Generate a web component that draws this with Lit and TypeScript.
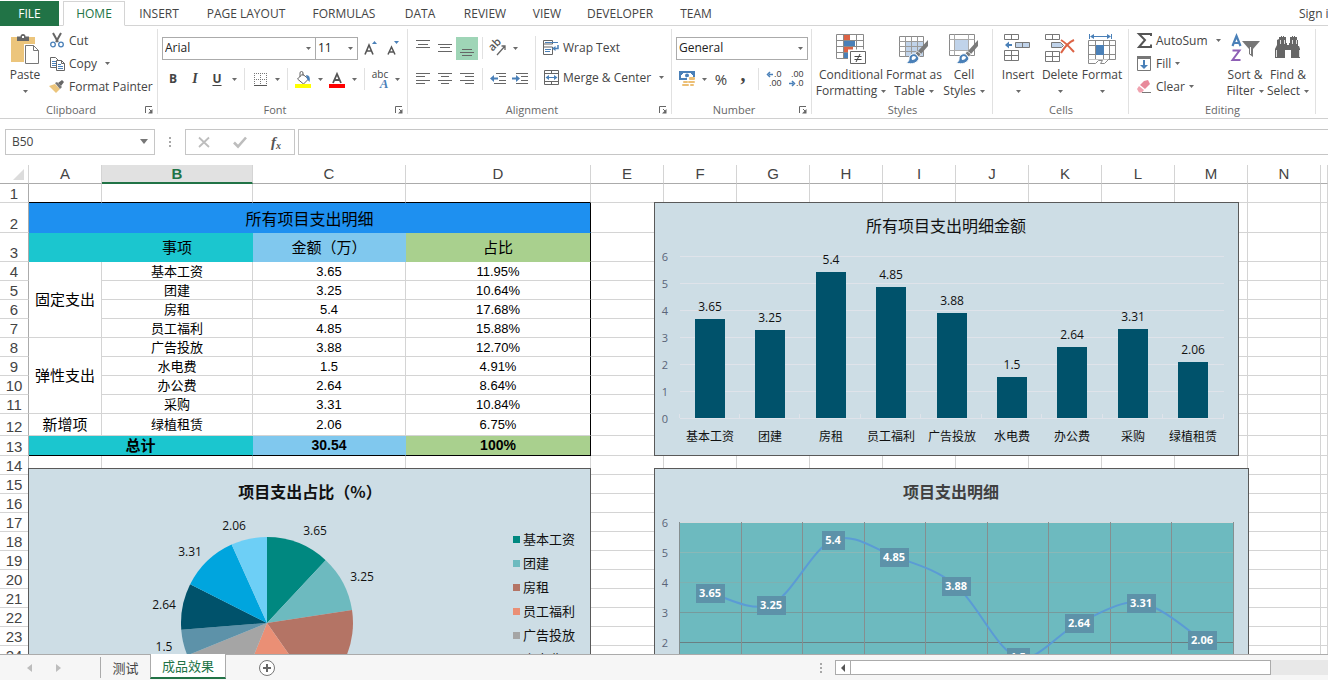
import { LitElement, html, svg, css, nothing } from "lit";
import type { TemplateResult } from "lit";
import { customElement, property } from "lit/decorators.js";
import { classMap } from "lit/directives/class-map.js";

interface Expense {
  name: string;
  value: number;
  share: string;
  color: string;
}

const expenses: Expense[] = [
  { name: "基本工资", value: 3.65, share: "11.95%", color: "#008880" },
  { name: "团建", value: 3.25, share: "10.64%", color: "#6dbabf" },
  { name: "房租", value: 5.4, share: "17.68%", color: "#b47465" },
  { name: "员工福利", value: 4.85, share: "15.88%", color: "#ea8f75" },
  { name: "广告投放", value: 3.88, share: "12.70%", color: "#a5a5a5" },
  { name: "水电费", value: 1.5, share: "4.91%", color: "#5d92a9" },
  { name: "办公费", value: 2.64, share: "8.64%", color: "#00526b" },
  { name: "采购", value: 3.31, share: "10.84%", color: "#00a5de" },
  { name: "绿植租赁", value: 2.06, share: "6.75%", color: "#6dcff6" },
];

const icon = (w: number, h: number, body: unknown) =>
  html`<svg width=${w} height=${h} viewBox="0 0 ${w} ${h}" aria-hidden="true">${body}</svg>`;

const arrow = icon(5, 3, svg`<path d="M0 0h5L2.5 3z" fill="#6a6a6a"/>`);

const rules = (w: number, h: number, lines: number[][]) =>
  icon(w, h, svg`<path stroke="#666" fill="none" d=${lines.map(([x, y, l]) => `M${x} ${y}.5h${l}`).join("")} />`);

const brush = svg`<path d="M29 6v6l-7 8-3-3z" fill="#7a7a7a"/><path d="M18 17l4 3-2 3-4-3z" fill="#7a7a7a" stroke="#fff" stroke-width=".6"/>
  <path d="M17 20c-4-1-7 1-7 5 0 2-1 3-3 4 6 2 12 0 13-5z" fill="#4a80b8" stroke="#fff"/>
  <path d="M15 22c-2 0-3 2-2 4 2 0 4-1 4-3z" fill="#fff"/>`;

const icons = {
  paste: icon(28, 30, svg`<path d="M0 3h24v25H0z" fill="#ecc57c"/><path d="M6 7V2.500h3.500a2.500 2.500 0 0 1 5 0H18V7z" fill="#666"/><path d="M11 2h2v2h-2z" fill="#fff"/>
    <path d="M14.500 11.500H23l5 5V29.500H14.500z" fill="#fff" stroke="#fff" stroke-width="3"/><path d="M14.500 11.500H22.500l5 5V29.500H14.500z" fill="#fff" stroke="#777"/><path d="M22.500 11.500v5h5" fill="none" stroke="#777"/>`),
  cut: icon(14, 15, svg`<path d="M3 0l5 9M11 0L6 9" stroke="#666" stroke-width="2" fill="none"/><circle cx="3" cy="11.500" r="2.300" fill="none" stroke="#4a80b8" stroke-width="1.300"/><circle cx="11" cy="11.500" r="2.300" fill="none" stroke="#4a80b8" stroke-width="1.300"/>`),
  copy: icon(15, 14, svg`<path d="M.5.5h5l3 3v7h-8z" fill="#fff" stroke="#666"/><path d="M2 4.500h4M2 6.500h4M2 8.500h4" stroke="#4a80b8"/><path d="M6.500 3.500h5l3 3v7h-8z" fill="#fff" stroke="#666"/><path d="M11.500 3.500v3h3" fill="none" stroke="#666"/><path d="M8 7.500h3M8 9.500h5M8 11.500h5" stroke="#4a80b8"/>`),
  painter: icon(16, 14, svg`<path d="M0 6l6-2 5 5-4 4z" fill="#ecc57c"/><path d="M6 3l2-1 5 5-2 2z" fill="#777"/><path d="M9 3l4-3 2 2-3 4z" fill="#666"/>`),
  growFont: icon(14, 14, svg`<path d="M1 13.500L5 4l4 9.500M2.500 10h5" stroke="#555" stroke-width="1.600" fill="none"/><path d="M8 3h5L10.500 0z" fill="#4a80b8"/>`),
  shrinkFont: icon(14, 14, svg`<path d="M2 13.500L5.500 6 9 13.500M3.500 11h4" stroke="#555" stroke-width="1.500" fill="none"/><path d="M8 0h5l-2.500 3z" fill="#4a80b8"/>`),
  borders: icon(13, 13, svg`<path d="M0 .5h13M0 6.500h13M.5 0v12M6.500 0v12M12.500 0v12" stroke="#777" stroke-dasharray="1 1" fill="none"/><path d="M0 12.500h13" stroke="#555"/>`),
  fill: icon(16, 17, svg`<path d="M2.500 8L7.500 3l6 5-5 5z" fill="#fff" stroke="#666"/><path d="M5 6V2q0-1.500 1.500-1.500T8 2v3" fill="none" stroke="#666"/><path d="M11 4q5 0 3.500 7L12 8z" fill="#4a80b8"/><path d="M0 13h16v4H0z" fill="#ff0"/>`),
  fontColor: icon(16, 17, svg`<path d="M4 12L8 3l4 9M5.500 9h5" stroke="#555" stroke-width="1.800" fill="none"/><path d="M0 13h16v4H0z" fill="#f00"/>`),
  alignTop: rules(14, 18, [[0, 1, 14], [2, 5, 10], [0, 8, 14]]),
  alignMiddle: rules(14, 18, [[0, 5, 14], [2, 8, 10], [0, 12, 14]]),
  alignBottom: rules(14, 18, [[2, 10, 10], [0, 13, 14], [2, 16, 10]]),
  alignLeft: rules(14, 12, [[0, 0, 14], [0, 3, 9], [0, 7, 14], [0, 10, 9]]),
  alignCenter: rules(14, 12, [[0, 0, 14], [3, 3, 8], [0, 7, 14], [3, 10, 8]]),
  alignRight: rules(14, 12, [[0, 0, 14], [5, 3, 9], [0, 7, 14], [5, 10, 9]]),
  outdent: icon(16, 12, svg`<path d="M6 .5h10M9 3.500h7M9 7.500h7M4 10.500h12" stroke="#666"/><path d="M0 5.500L4 2v2.500h4v2H4V9z" fill="#4a80b8"/>`),
  indent: icon(16, 12, svg`<path d="M4 .5h12M9 3.500h7M9 7.500h7M4 10.500h12" stroke="#666"/><path d="M8 5.500L4 2v2.500H0v2h4V9z" fill="#4a80b8"/>`),
  orientation: icon(17, 16, svg`<text y="3" transform="translate(5 5) rotate(-45)" text-anchor="middle" font-size="11" font-weight="600" fill="#555">ab</text><path d="M7 15l8-9M11.500 6H15v4" stroke="#666" fill="none" stroke-width="1.300"/>`),
  wrap: icon(16, 15, svg`<path d="M.5.500h9v3.500h-9zM.5 7h9v7.500h-9zM.5 4v3" fill="#fff" stroke="#666"/><path d="M2 2.500h13" stroke="#4a80b8"/><path d="M2 9.500h6M2 11.500h5" stroke="#4a80b8"/><path d="M15 5v3.500h-3" stroke="#4a80b8" stroke-width="1.500" fill="none"/><path d="M9 8.500L12.500 6v5z" fill="#4a80b8"/>`),
  merge: icon(15, 15, svg`<path d="M.5.500h14v14H.5zM.5 3.500h14M.5 11.500h14M7.500.500v3M7.500 11.500v3" fill="none" stroke="#666"/><path d="M3 7.500h9" stroke="#4a80b8"/><path d="M1.500 7.500L5 5v5zM13.500 7.500L10 5v5z" fill="#4a80b8"/>`),
  money: icon(16, 16, svg`<path d="M0 0h16v9H0z" fill="#4a80b8"/><path d="M2 2h12v5H2z" fill="#fff"/><path d="M2 2h2v1H3v1H2zM12 2h2v2h-1V3h-1z" fill="#4a80b8"/><circle cx="8" cy="4.500" r="2" fill="#4a80b8"/>
    <path d="M8 6h8v9H10v1H3v-6h5z" fill="#fff"/><g fill="#ecbf75"><rect x="10" y="6" width="6" height="3" rx="1"/><rect x="9" y="10" width="7" height="2" rx="1"/><rect x="11" y="13" width="4" height="2" rx="1"/><rect x="4" y="10" width="5" height="2" rx="1"/><rect x="3" y="13" width="7" height="2" rx="1"/></g>`),
  sigma: icon(15, 15, svg`<path d="M14 3V1H2l6 6-6 7h12v-2.500" fill="none" stroke="#555" stroke-width="2"/>`),
  fillDown: icon(14, 15, svg`<path d="M.5.500h13v14H.5z" fill="#fff" stroke="#777"/><path d="M0 0h14v3H0z" fill="#777"/><path d="M6 4h2v5h3l-4 4-4-4h3z" fill="#4a80b8"/>`),
  eraser: icon(14, 13, svg`<path d="M7 1l4-1 2 4-5 5-5-4z" fill="#e8899a"/><path d="M2 6l5 4-2 2.500H2L0 9z" fill="#f0a3b0"/><path d="M5 12.500h9" stroke="#777"/>`),
  conditional: icon(31, 31, svg`<path d="M.5.500h27v24H.5zM.5 6.500h27M.5 12.500h27M.5 18.500h27M7.500.500v24M20.500.500v24" fill="#fff" stroke="#8a8a8a"/><path d="M8 1h6v5H8z" fill="#dc6345"/><path d="M8 7h11v5H8z" fill="#4a80b8"/><path d="M8 13h9v5H8z" fill="#dc6345"/><path d="M8 19h5v5H8z" fill="#4a80b8"/><path d="M13 16.500h17v13H13z" fill="#fff" stroke="#fff" stroke-width="2"/><path d="M14.500 17.500h15v12h-15z" fill="#fff" stroke="#666"/><path d="M18.500 22.500h7M18.500 25.500h7M24 20l-4 8" stroke="#444"/>`),
  formatTable: icon(30, 31, svg`<path d="M.5 2.500h24v20H.5z" fill="#fff" stroke="#8a8a8a"/><path d="M6 8h18v14H6z" fill="#c0d3ea"/><path d="M.5 7.500h24M.5 12.500h24M.5 17.500h24M6.500 2.500v20M12.500 2.500v20M18.500 2.500v20" stroke="#9a9a9a"/>${brush}`),
  cellStyles: icon(30, 31, svg`<path d="M.5.500h25v21H.5z" fill="#fff" stroke="#8a8a8a"/><path d="M.5 5.500h25M.5 16.500h25M5.500.500v21M19.500.500v21" stroke="#aaa"/><path d="M6 6h13v10H6z" fill="#c0d3ea"/>${brush}`),
  insert: icon(28, 30, svg`<path d="M.5.500h14v5H.5zM7.500.500v5M.5 16.500h14v10H.5zM.5 21.500h14M7.500 16.500v10" fill="#fff" stroke="#777"/><path d="M11.500 8.500h14v5h-14z" fill="#c0d3ea" stroke="#777"/><path d="M18.500 8.500v5" stroke="#777"/><path d="M3 11h5" stroke="#4a80b8" stroke-width="2"/><path d="M1 11L5 7.500v7z" fill="#4a80b8"/>`),
  remove: icon(30, 30, svg`<path d="M.5.500h14v5H.5zM7.500.500v5M.5 17.500h14v10H.5zM.5 22.500h14M7.500 17.500v10" fill="#fff" stroke="#777"/><path d="M6.500 8.500h9l3 3-2 2h-10z" fill="#c0d3ea" stroke="#777"/><path d="M16 6q5 3 13 12M29 6q-7 3-13 13" stroke="#dc6345" stroke-width="2" fill="none"/>`),
  format: icon(29, 31, svg`<path d="M1.500 0v5M23.500 0v5M3 2.500h19" stroke="#4a80b8"/><path d="M2 2.500L6 0v5zM23 2.500L19 0v5z" fill="#4a80b8"/><path d="M.5 6.500h27v19H.5zM.5 11.500h27M.5 20.500h27M7.500 6.500v19M15.500 6.500v19M21.500 6.500v19" fill="#fff" stroke="#8a8a8a"/><path d="M8 11h8v10H8z" fill="#4a80b8"/><path d="M.5 25.500v4h7l3-3h4l-2 3h4l4-4" fill="#fff" stroke="#8a8a8a"/>`),
  sort: icon(29, 29, svg`<path d="M1.500 12L5.500 2l4 10M3 9h5" stroke="#4a80b8" stroke-width="2.200" fill="none"/><path d="M1.500 16.500h7L1.500 26h8" stroke="#8e5fb5" stroke-width="2" fill="none"/><path d="M11 7h18l-7 8v8l-4-3v-5z" fill="#777"/><path d="M19.500 13v7" stroke="#fff"/>`),
  find: icon(28, 26, svg`<path d="M5 5V3h2V2h1v1h1V2h1v1h2v2h0v4h1v2h2V9h1V3h2V2h1v1h1V2h1v1h2v2 1h1v6h1l1 3v9H17v-8h-6v8H1v-9l2-4V6z" fill="#666"/><path d="M6.500 6v4M2.500 16v7M10.500 6v4M18.500 6v4M25.500 16v7M22.500 6v4" stroke="#fff" stroke-width=".8"/>`),
  launcher: icon(8, 8, svg`<path d="M.5 7V.5H7M4 3l2.500 2.500" fill="none" stroke="#666"/><path d="M7.500 3v4.500H3z" fill="#666"/>`),
  cancel: icon(12, 12, svg`<path d="M1 1.500l10 9.500M11 1.500L1 11" stroke="#bdbdbd" stroke-width="1.800"/>`),
  check: icon(14, 12, svg`<path d="M1 6.500l4 4L13 1.500" stroke="#bdbdbd" stroke-width="2.600" fill="none"/>`),
  dots: icon(2, 12, svg`<path d="M0 1h2v2H0zM0 5h2v2H0zM0 9h2v2H0z" fill="#a8a8a8"/>`),
  prev: icon(5, 8, svg`<path d="M5 0v8L0 4z" fill="#bdbdbd"/>`),
  next: icon(5, 8, svg`<path d="M0 0v8l5-4z" fill="#bdbdbd"/>`),
  add: icon(18, 18, svg`<circle cx="9" cy="9" r="7.500" fill="#fff" stroke="#777"/><path d="M5 9h8M9 5v8" stroke="#666" stroke-width="2"/>`),
  scrollLeft: icon(4, 8, svg`<path d="M4 0v8L0 4z" fill="#555"/>`),
  corner: icon(11, 11, svg`<path d="M11 0v11H0z" fill="#dcdcdc"/>`),
};

const reset = css`
  *, *::before, *::after { box-sizing: border-box; }
  button, select, input { margin: 0; padding: 0; border: 0; border-radius: 0; background: none; color: inherit; font: inherit; appearance: none; }
  svg { display: block; flex: none; overflow: visible; }
`;

@customElement("ribbon-bar")
export class RibbonBar extends LitElement {
  static styles = [reset, css`
    :host { display: flex; flex: none; border-bottom: 1px solid #d0d0d0; padding-top: 3px; background: #fff; color: #444; font: 12px/16px "Open Sans", "Noto Sans", sans-serif; white-space: nowrap; }
    .group { display: flex; flex-direction: column; flex: none; padding-left: 4px; background: linear-gradient(#e1e1e1, #e1e1e1) right top / 1px calc(100% - 4px) no-repeat; }
    .clipboard { width: 158px; } .font { width: 250px; } .align { width: 264px; } .number { width: 140px; }
    .styles { width: 181px; } .cells { width: 136px; } .editing { width: 187px; }
    .body { display: flex; height: 73px; }
    .foot { display: flex; align-items: center; height: 16px; margin-left: -4px; font-size: 11px; color: #666; }
    .foot button { width: 8px; margin: 0 5px 0 3px; }
    .foot span { flex: 1; text-align: center; }
    .lines { display: flex; flex-direction: column; gap: 7px; padding-top: 7px; }
    .line { display: flex; align-items: center; height: 24px; }
    .tool { display: flex; align-items: center; justify-content: center; width: 22px; height: 23px; }
    .on { background: #9fd5b7; }
    .drop { display: flex; justify-content: center; width: 12px; padding: 9px 0; }
    .bar { width: 1px; height: 22px; margin: 0 4px; background: #e1e1e1; }
    .bold { font-weight: 700; }
    .italic { font: italic 700 14px "Liberation Serif", serif; }
    .under { font-weight: 700; text-decoration: underline; text-underline-offset: 2px; }
    .big { display: flex; flex-direction: column; align-items: center; padding-top: 5px; flex: none; }
    .big .pic { display: flex; justify-content: center; height: 33px; }
    .big .row { display: flex; align-items: center; justify-content: center; gap: 4px; height: 16px; }
    .small { display: flex; align-items: center; gap: 4px; height: 23px; }
    .small .pic { display: flex; justify-content: center; width: 16px; }
    .w42 { width: 42px; } .w70 { width: 70px; } .w54 { width: 56px; } .w44 { width: 44px; }
    .col { display: flex; flex-direction: column; margin: 0 3px; }
    .box { position: relative; display: flex; align-items: center; height: 23px; border: 1px solid #ababab; color: #222; }
    .box select { width: 100%; height: 100%; padding-left: 2px; }
    .box svg { position: absolute; right: 4px; pointer-events: none; }
    .family { width: 154px; } .size { width: 43px; margin-left: -1px; margin-right: 2px; } .format { width: 132px; }
    .split { display: flex; flex-direction: column; gap: 7px; margin: 7px 0 12px 4px; border-left: 1px solid #e1e1e1; padding-left: 7px; }
    .script { display: flex; flex-direction: column; font-size: 10px; line-height: 9px; align-items: center; }
    .script b { color: #4a80b8; font: italic 700 13px/9px "Liberation Serif", serif; margin-left: 8px; }
    .decimals { display: flex; flex-direction: column; align-items: flex-end; width: 15px; font: 9px/9px "Liberation Sans", sans-serif; }
    .decimals span { display: flex; align-items: center; gap: 1px; }
    .percent { font-size: 15px; }
    .comma { font: 700 20px/12px "Liberation Serif", serif; padding-bottom: 10px; }
    .wide { width: 56px; text-align: left; }
  `];

  private drop(label: string) {
    return html`<button class="drop" aria-label=${label}>${arrow}</button>`;
  }
  private tool(label: string, content: unknown, extra = "") {
    return html`<button class="tool ${extra}" aria-label=${label}>${content}</button>`;
  }
  private big(width: string, pic: TemplateResult, first: string, second = "") {
    return html`<button class="big ${width}"><span class="pic">${pic}</span><span class="row">${first}</span><span class="row">${second} ${arrow}</span></button>`;
  }
  private small(pic: TemplateResult, label: string, tail: unknown = nothing, extra = "") {
    return html`<button class="small"><span class="pic">${pic}</span><span class=${extra}>${label}</span>${tail}</button>`;
  }
  private foot(label: string, launcher = true) {
    return html`<div class="foot"><span>${label}</span>${launcher ? html`<button aria-label="${label} settings">${icons.launcher}</button>` : nothing}</div>`;
  }

  render() {
    const bar = html`<span class="bar"></span>`;
    const left = icon(6, 5, svg`<path d="M6 2.500H2M3 0L.5 2.500 3 5" stroke="#4a80b8" stroke-width="1.500" fill="none"/>`);
    const right = icon(6, 5, svg`<path d="M0 2.500h4M3 0l2.500 2.500L3 5" stroke="#4a80b8" stroke-width="1.500" fill="none"/>`);
    return html`
      <section class="group clipboard">
        <div class="body">
          ${this.big("w42", icons.paste, "Paste")}
          <div class="col">
            ${this.small(icons.cut, "Cut")}
            ${this.small(icons.copy, "Copy", html`<span class="drop">${arrow}</span>`)}
            ${this.small(icons.painter, "Format Painter")}
          </div>
        </div>
        ${this.foot("Clipboard")}
      </section>
      <section class="group font">
        <div class="body lines">
          <div class="line">
            <label class="box family"><select aria-label="Font"><option>Arial</option></select>${arrow}</label>
            <label class="box size"><select aria-label="Font size"><option>11</option></select>${arrow}</label>
            ${this.tool("Increase font size", icons.growFont)}${this.tool("Decrease font size", icons.shrinkFont)}
          </div>
          <div class="line">
            ${this.tool("Bold", "B", "bold")}${this.tool("Italic", "I", "italic")}${this.tool("Underline", "U", "under")}${this.drop("Underline styles")}${bar}
            ${this.tool("Borders", icons.borders)}${this.drop("Border styles")}${bar}
            ${this.tool("Fill color", icons.fill)}${this.drop("Fill colors")}${this.tool("Font color", icons.fontColor)}${this.drop("Font colors")}${bar}
            ${this.tool("Phonetic", html`<span class="script">abc<b>A</b></span>`)}${this.drop("Phonetic options")}
          </div>
        </div>
        ${this.foot("Font")}
      </section>
      <section class="group align">
        <div class="body">
          <div class="lines">
            <div class="line">
              ${this.tool("Top align", icons.alignTop)}${this.tool("Middle align", icons.alignMiddle)}${this.tool("Bottom align", icons.alignBottom, "on")}${bar}
              ${this.tool("Orientation", icons.orientation)}${this.drop("Orientation options")}
            </div>
            <div class="line">
              ${this.tool("Align left", icons.alignLeft)}${this.tool("Center", icons.alignCenter)}${this.tool("Align right", icons.alignRight)}${bar}
              ${this.tool("Decrease indent", icons.outdent)}${this.tool("Increase indent", icons.indent)}
            </div>
          </div>
          <div class="split">
            ${this.small(icons.wrap, "Wrap Text")}
            ${this.small(icons.merge, "Merge & Center", html`<span class="drop">${arrow}</span>`)}
          </div>
        </div>
        ${this.foot("Alignment")}
      </section>
      <section class="group number">
        <div class="body lines">
          <div class="line"><label class="box format"><select aria-label="Number format"><option>General</option></select>${arrow}</label></div>
          <div class="line">
            ${this.tool("Accounting format", icons.money)}${this.drop("Accounting formats")}
            ${this.tool("Percent style", "%", "percent")}${this.tool("Comma style", html`<span class="comma">,</span>`)}${bar}
            ${this.tool("Increase decimal", html`<span class="decimals"><span>${left}.0</span><span>.00</span></span>`)}
            ${this.tool("Decrease decimal", html`<span class="decimals"><span>.00</span><span>${right}.0</span></span>`)}
          </div>
        </div>
        ${this.foot("Number")}
      </section>
      <section class="group styles">
        <div class="body">
          ${this.big("w70", icons.conditional, "Conditional", "Formatting")}
          ${this.big("w54", icons.formatTable, "Format as", "Table")}
          ${this.big("w44", icons.cellStyles, "Cell", "Styles")}
        </div>
        ${this.foot("Styles", false)}
      </section>
      <section class="group cells">
        <div class="body">
          ${this.big("w42", icons.insert, "Insert")}${this.big("w42", icons.remove, "Delete")}${this.big("w42", icons.format, "Format")}
        </div>
        ${this.foot("Cells", false)}
      </section>
      <section class="group editing">
        <div class="body">
          <div class="col">
            ${this.small(icons.sigma, "AutoSum", arrow, "wide")}
            ${this.small(icons.fillDown, "Fill", arrow)}
            ${this.small(icons.eraser, "Clear", arrow)}
          </div>
          ${this.big("w42", icons.sort, "Sort &", "Filter")}${this.big("w44", icons.find, "Find &", "Select")}
        </div>
        ${this.foot("Editing", false)}
      </section>`;
  }
}

const chartBase = css`
  :host { display: block; background: #cddde5; border: 1px solid #595959; overflow: hidden; }
  svg { display: block; }
  text { font: 12px "Open Sans", "Noto Sans CJK SC", sans-serif; fill: #111; text-anchor: middle; }
  .title { font: 16px "Noto Sans CJK SC", sans-serif; }
  .category { font-family: "Noto Sans CJK SC", sans-serif; }
  .axis { fill: #5a6478; font-size: 11px; }
`;

@customElement("bar-chart")
export class BarChart extends LitElement {
  static styles = [chartBase];
  render() {
    const step = 544 / expenses.length;
    const base = 215;
    return html`<svg width="583" height="252" role="img" aria-label="所有项目支出明细金额">
      <text class="title" x="291" y="29">所有项目支出明细金额</text>
      ${[0, 1, 2, 3, 4, 5, 6].map((n) => svg`
        <path d="M25 ${base - n * 27}.5h544" stroke="#dfe3ea" />
        <text class="axis" x="10" y=${base + 5 - n * 27}>${n}</text>`)}
      <path stroke="#dfe3ea" d=${Array.from({ length: 10 }, (_, i) => `M${Math.floor(24 + i * step)}.5 ${base - 4}v4`).join("")} />
      ${expenses.map((e, i) => {
        const x = Math.floor(25 + step * (i + 0.5));
        const h = Math.round(e.value * 27);
        return svg`<rect x=${x - 15} y=${base - h} width="30" height=${h} fill="#00526b" />
          <text x=${x} y=${base - h - 8}>${e.value}</text>
          <text class="category" x=${x} y="238">${e.name}</text>`;
      })}
    </svg>`;
  }
}

@customElement("pie-chart")
export class PieChart extends LitElement {
  static styles = [chartBase, css`
    .title { font-weight: 700; }
    .legend { font: 13px "Noto Sans CJK SC", sans-serif; text-anchor: start; }
  `];
  render() {
    const total = expenses.reduce((sum, e) => sum + e.value, 0);
    const cx = 238, cy = 154, r = 86;
    const at = (turn: number, rx: number, ry = rx) => [cx + rx * Math.sin(turn * 2 * Math.PI), cy - ry * Math.cos(turn * 2 * Math.PI)];
    let from = 0;
    return html`<svg width="561" height="270" role="img" aria-label="项目支出占比（%）">
      <text class="title" x="281" y="29">项目支出占比（%）</text>
      ${expenses.map((e) => {
        const to = from + e.value / total;
        const [x1, y1] = at(from, r);
        const [x2, y2] = at(to, r);
        const [lx, ly] = at((from + to) / 2, 91, 100);
        from = to;
        return svg`<path d="M${cx} ${cy}L${x1} ${y1}A${r} ${r} 0 0 1 ${x2} ${y2}z" fill=${e.color} />
          <text x=${Math.round(lx + (lx > cx ? 15 : -14))} y=${Math.round(ly + 5)}>${e.value}</text>`;
      })}
      ${expenses.map((e, i) => svg`<rect x="484" y=${67 + i * 24} width="7" height="7" fill=${e.color} />
        <text class="legend" x="494" y=${75 + i * 24}>${e.name}</text>`)}
    </svg>`;
  }
}

@customElement("line-chart")
export class LineChart extends LitElement {
  static styles = [chartBase, css`
    .title { font-weight: 700; fill: #404040; }
    .tag { font-size: 11px; font-weight: 700; fill: #fff; }
  `];
  render() {
    const left = 24;
    const step = 554 / expenses.length;
    const pts = expenses.map((e, i) => [left + step * (i + 0.5), 53 + (6 - e.value) * 30]);
    const get = (i: number) => pts[Math.max(0, Math.min(pts.length - 1, i))];
    const curve = pts.slice(1).map((p, k) => {
      const [a, b, d] = [get(k - 1), get(k), get(k + 2)];
      return `C${b[0] + (p[0] - a[0]) / 6} ${b[1] + (p[1] - a[1]) / 6} ${p[0] - (d[0] - b[0]) / 6} ${p[1] - (d[1] - b[1]) / 6} ${p[0]} ${p[1]}`;
    }).join("");
    const gridColors = ["#6a7f82", "#6a7f82", "#6a7f82", "#779a9c", "#7eb0b1", "#8ab8b7", "#d4dadd"];
    return html`<svg width="593" height="270" role="img" aria-label="项目支出明细">
      <text class="title" x="296" y="29">项目支出明细</text>
      <rect x=${left} y="53" width="554" height="180" fill="#6dbabf" />
      ${gridColors.map((c, n) => svg`<path d="M${left} ${53 + (6 - n) * 30}.5h554" stroke=${c} />
        <text class="axis" x="10" y=${58 + (6 - n) * 30}>${n}</text>`)}
      <path stroke="#858f90" d=${Array.from({ length: 10 }, (_, i) => `M${Math.round(left + i * step)}.5 53v180`).join("")} />
      <path d="M${pts[0][0]} ${pts[0][1]}${curve}" fill="none" stroke="#5b9bd5" stroke-width="2" />
      ${expenses.map((e, i) => {
        const w = String(e.value).length > 3 ? 29 : 23;
        const x = Math.round(pts[i][0]), y = Math.round(pts[i][1]);
        return svg`<rect x=${x - (w - 1) / 2} y=${y - 9} width=${w} height="19" fill="#5d92a9" />
          <text class="tag" x=${x} y=${y + 4}>${e.value}</text>`;
      })}
    </svg>`;
  }
}

@customElement("work-sheet")
export class WorkSheet extends LitElement {
  @property({ type: String }) activeColumn = "B";

  static styles = [reset, css`
    :host { display: block; position: relative; overflow: hidden; background: #fff; }
    table { width: 100%; table-layout: fixed; border-collapse: separate; border-spacing: 0; font: 13px/17px "Liberation Sans", "Noto Sans CJK SC", sans-serif; color: #000; }
    .c-head { width: 29px; } .c-std { width: 73px; } .c-b { width: 151px; } .c-c { width: 153px; } .c-d { width: 185px; }
    th, td { height: 19px; padding: 0; text-align: center; vertical-align: middle; border: solid #d4d4d4; border-width: 0 1px 1px 0; white-space: nowrap; }
    thead th { font-size: 15px; font-weight: 400; color: #444; line-height: 18px; border-bottom-color: #ababab; vertical-align: bottom; }
    thead .active { background: #e1e1e1; color: #217346; font-weight: 700; border-bottom: 2px solid #217346; line-height: 16px; }
    .corner svg { margin: 0 4px 3px auto; }
    tbody th { font-size: 15px; font-weight: 400; color: #444; vertical-align: bottom; border-right-color: #ababab; }
    .h30 > * { height: 30px; } .h29 > * { height: 29px; } .h22 > * { height: 22px; } .h20 > * { height: 20px; }
    .name { font-family: "Noto Sans CJK SC", sans-serif; line-height: 15px; padding-bottom: 2px; }
    .edge { border-right-color: #000; }
    .rule { border-bottom-color: #000; }
    .banner { font: 16px/20px "Noto Sans CJK SC", sans-serif; background: #1e90f0; border-color: #1e90f0 #000 #1e90f0 #1e90f0; }
    .head { font: 15px/20px "Noto Sans CJK SC", sans-serif; }
    .teal { background: #1bc6cf; border-color: #1bc6cf; }
    .sky { background: #80c8ee; border-color: #80c8ee; }
    .green { background: #a9d08e; border-color: #a9d08e #000 #a9d08e #a9d08e; }
    .total { font-size: 14px; font-weight: 700; border-bottom-color: #000; }
    .kind { font-family: "Noto Sans CJK SC", sans-serif; font-size: 15px; padding-bottom: 2px; }
    bar-chart, pie-chart, line-chart { position: absolute; }
    bar-chart { left: 654px; top: 37px; width: 585px; height: 254px; }
    pie-chart { left: 28px; top: 303px; width: 563px; height: 272px; }
    line-chart { left: 654px; top: 303px; width: 595px; height: 272px; }
  `];

  private cells(row: number) {
    if (row === 1) return html`<td class="rule"></td><td class="rule"></td><td class="rule"></td><td class="rule"></td>`;
    if (row === 2) return html`<td class="banner" colspan="4">所有项目支出明细</td>`;
    if (row === 3) return html`<td class="teal"></td><td class="head teal">事项</td><td class="head sky">金额（万）</td><td class="head green">占比</td>`;
    if (row <= 12) {
      const e = expenses[row - 4];
      const kind = row === 4 ? html`<td class="kind" rowspan="4">固定支出</td>`
        : row === 8 ? html`<td class="kind" rowspan="4">弹性支出</td>`
        : row === 12 ? html`<td class="kind">新增项</td>` : nothing;
      return html`${kind}<td class="name">${e.name}</td><td>${e.value}</td><td class="edge">${e.share}</td>`;
    }
    if (row === 13) return html`<td class="teal total kind" colspan="2">总计</td><td class="sky total">30.54</td><td class="green total">100%</td>`;
    return html`<td></td><td></td><td></td><td></td>`;
  }

  render() {
    const letters = "ABCDEFGHIJKLMN".split("");
    const heights: Record<number, string> = { 2: "h30", 3: "h29", 12: "h22", 13: "h20" };
    return html`
      <table>
        <colgroup>
          <col class="c-head"><col class="c-std"><col class="c-b"><col class="c-c"><col class="c-d">
          ${letters.slice(4).map(() => html`<col class="c-std">`)}<col>
        </colgroup>
        <thead><tr>
          <th class="corner" aria-label="Select all">${icons.corner}</th>
          ${letters.map((l) => html`<th scope="col" class=${classMap({ active: l === this.activeColumn })}>${l}</th>`)}<th></th>
        </tr></thead>
        <tbody>
          ${Array.from({ length: 24 }, (_, i) => i + 1).map((row) => html`<tr class=${heights[row] ?? ""}>
            <th scope="row">${row}</th>${this.cells(row)}${letters.slice(4).map(() => html`<td></td>`)}<td></td>
          </tr>`)}
        </tbody>
      </table>
      <bar-chart></bar-chart><pie-chart></pie-chart><line-chart></line-chart>`;
  }
}

@customElement("app-root")
export class AppRoot extends LitElement {
  static styles = [reset, css`
    :host { display: flex; flex-direction: column; height: 100vh; overflow: hidden; background: #fff; color: #444; font: 12px/16px "Open Sans", "Noto Sans", sans-serif; white-space: nowrap; }
    work-sheet { flex: 1; min-height: 0; }
    .tabs { display: flex; flex: none; height: 26px; padding-top: 1px; border-bottom: 1px solid #d4d4d4; }
    .tabs button { flex: none; height: 25px; }
    .tabs .file { width: 59px; margin-right: 4px; background: #217346; color: #fff; }
    .tabs .current { border: 1px solid #d4d4d4; border-bottom-color: #fff; background: #fff; color: #217346; }
    .w62 { width: 62px; } .w68 { width: 68px; } .w106 { width: 106px; } .w90 { width: 90px; } .w56 { width: 56px; }
    .tabs .sign { width: 46px; margin-left: auto; margin-right: -17px; text-align: left; }
    .formula { display: flex; flex: none; align-items: center; padding: 10px 0 10px 5px; }
    .name-box { position: relative; width: 150px; height: 26px; border: 1px solid #c6c6c6; }
    .name-box select { width: 100%; height: 100%; padding-left: 6px; }
    .name-box svg { position: absolute; right: 6px; top: 9px; pointer-events: none; }
    .formula .grip { width: 30px; display: flex; justify-content: center; }
    .actions { display: flex; width: 110px; height: 26px; border: 1px solid #c6c6c6; }
    .actions button { display: flex; flex: 1; align-items: center; justify-content: center; }
    .actions .fx { font: italic 700 15px "Liberation Serif", serif; color: #555; }
    .fx sub { font-size: 10px; vertical-align: -2px; }
    .entry { flex: 1; min-width: 0; margin-left: 3px; height: 26px; border: 1px solid #c6c6c6; border-right: 0; padding: 0 6px; }
    .status { display: flex; flex: none; height: 26px; border-top: 1px solid #ababab; background: #f6f6f6; font: 13px/20px "Noto Sans CJK SC", sans-serif; }
    .nav { display: flex; align-items: center; gap: 24px; width: 101px; padding-left: 27px; margin: 2px 0; border-right: 1px solid #ababab; }
    .nav button { display: flex; }
    .sheet { width: 49px; }
    .open { width: 76px; height: 25px; margin-top: -1px; border: solid #ababab; border-width: 0 1px; border-bottom: 2px solid #217346; background: #fff; color: #217346; }
    .add { display: flex; align-items: center; margin-left: 32px; }
    .scroller { display: flex; align-items: center; width: 508px; margin-left: auto; }
    .scroller .grip { width: 15px; }
    .back { display: flex; align-items: center; justify-content: center; width: 16px; height: 15px; border: 1px solid #ababab; background: #fff; }
    .track { display: flex; flex: 1; height: 15px; background: #e8e8e8; }
    .thumb { width: 88%; border: 1px solid #ababab; border-left: 0; background: #fff; }
  `];

  render() {
    const tabs: [string, string][] = [["HOME", "w62 current"], ["INSERT", "w68"], ["PAGE LAYOUT", "w106"], ["FORMULAS", "w90"], ["DATA", "w62"], ["REVIEW", "w68"], ["VIEW", "w56"], ["DEVELOPER", "w90"], ["TEAM", "w62"]];
    return html`
      <nav class="tabs">
        <button class="file">FILE</button>
        ${tabs.map(([label, cls]) => html`<button class=${cls}>${label}</button>`)}
        <button class="sign">Sign in</button>
      </nav>
      <ribbon-bar></ribbon-bar>
      <div class="formula">
        <label class="name-box"><select aria-label="Name box"><option>B50</option></select>${icon(8, 5, svg`<path d="M0 0h8L4 5z" fill="#777"/>`)}</label>
        <span class="grip">${icons.dots}</span>
        <div class="actions">
          <button aria-label="Cancel">${icons.cancel}</button><button aria-label="Enter">${icons.check}</button>
          <button class="fx" aria-label="Insert function"><span>f<sub>x</sub></span></button>
        </div>
        <input class="entry" aria-label="Formula">
      </div>
      <work-sheet></work-sheet>
      <footer class="status">
        <div class="nav"><button aria-label="Previous sheet">${icons.prev}</button><button aria-label="Next sheet">${icons.next}</button></div>
        <button class="sheet">测试</button>
        <button class="open">成品效果</button>
        <button class="add" aria-label="New sheet">${icons.add}</button>
        <div class="scroller">
          <span class="grip">${icons.dots}</span>
          <button class="back" aria-label="Scroll left">${icons.scrollLeft}</button>
          <div class="track"><div class="thumb"></div></div>
        </div>
      </footer>`;
  }
}
